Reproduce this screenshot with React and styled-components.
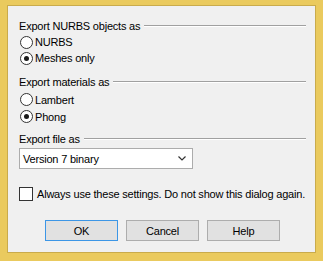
import React from "react";
import styled, { createGlobalStyle } from "styled-components";

const Global = createGlobalStyle`
  html, body { margin: 0; padding: 0; background: #e9c95c; }
  body {
    font-family: "Liberation Sans", Arial, sans-serif;
    font-size: 11px;
    letter-spacing: -0.2px;
    color: #000;
  }
`;

const Frame = styled.div`
  width: 323px;
  height: 261px;
  box-sizing: border-box;
  padding: 5px 7px 8px 7px;
  background: #eaca5e;
`;

const Panel = styled.div`
  height: 100%;
  box-sizing: border-box;
  border: 1px solid #c9ab4c;
  background: #f0f0f0;
  display: flex;
  flex-direction: column;
  padding: 13px 9px 0 11px;
`;

const GroupHeader = styled.div`
  display: flex;
  align-items: center;
  gap: 4px;
  height: 14px;
  margin-top: ${(p) => p.$top || 0}px;
  white-space: nowrap;
  &::after {
    content: "";
    flex: 1;
    height: 0;
    border-top: 1px solid #a0a0a0;
    border-bottom: 1px solid #ffffff;
  }
`;

const OptionRow = styled.div`
  display: flex;
  align-items: center;
  gap: 2px;
  height: ${(p) => p.$h || 16}px;
  margin-top: ${(p) => p.$top || 0}px;
  padding-left: 1px;
`;

const RadioCircle = styled.span`
  width: 11px;
  height: 11px;
  border: 1px solid #333;
  border-radius: 50%;
  background: #fff;
  display: flex;
  align-items: center;
  justify-content: center;
  flex: none;
  &::after {
    content: "";
    display: ${(p) => (p.$checked ? "block" : "none")};
    width: 5px;
    height: 5px;
    border-radius: 50%;
    background: #1a1a1a;
  }
`;

const Select = styled.div`
  width: 174px;
  height: 21px;
  box-sizing: border-box;
  margin-top: ${(p) => p.$top || 0}px;
  border: 1px solid #acacac;
  background: #fff;
  display: flex;
  align-items: center;
  padding: 0 6px 0 3px;
  justify-content: space-between;
`;

const CheckRow = styled.div`
  display: flex;
  align-items: center;
  gap: 4px;
  height: 14px;
  margin-top: ${(p) => p.$top || 0}px;
  white-space: nowrap;
`;

const CheckBox = styled.span`
  width: 12px;
  height: 12px;
  border: 1px solid #333;
  background: #fff;
  flex: none;
`;

const ButtonRow = styled.div`
  display: flex;
  gap: 8px;
  margin-top: ${(p) => p.$top || 0}px;
  padding-left: 26px;
`;

const Button = styled.div`
  width: 73px;
  height: 21px;
  box-sizing: border-box;
  border: 1px solid ${(p) => (p.$default ? "#3c96e6" : "#adadad")};
  background: #e1e1e1;
  display: flex;
  align-items: center;
  justify-content: center;
`;

function Radio({ checked, label, top, h }) {
  return (
    <OptionRow $top={top} $h={h}>
      <RadioCircle $checked={checked} />
      <span>{label}</span>
    </OptionRow>
  );
}

export default function App() {
  return (
    <>
      <Global />
      <Frame>
        <Panel>
          <GroupHeader>Export NURBS objects as</GroupHeader>
          <Radio top={1} label="NURBS" />
          <Radio checked label="Meshes only" />
          <GroupHeader $top={9}>Export materials as</GroupHeader>
          <Radio top={2} h={17} label="Lambert" />
          <Radio checked h={17} label="Phong" />
          <GroupHeader $top={7}>Export file as</GroupHeader>
          <Select $top={2}>
            <span>Version 7 binary</span>
            <svg width="8" height="5" viewBox="0 0 8 5">
              <path d="M0.5 0.5 L4 4 L7.5 0.5" fill="none" stroke="#333" strokeWidth="1.2" />
            </svg>
          </Select>
          <CheckRow $top={18}>
            <CheckBox />
            <span>Always use these settings. Do not show this dialog again.</span>
          </CheckRow>
          <ButtonRow $top={19}>
            <Button $default>OK</Button>
            <Button>Cancel</Button>
            <Button>Help</Button>
          </ButtonRow>
        </Panel>
      </Frame>
    </>
  );
}
